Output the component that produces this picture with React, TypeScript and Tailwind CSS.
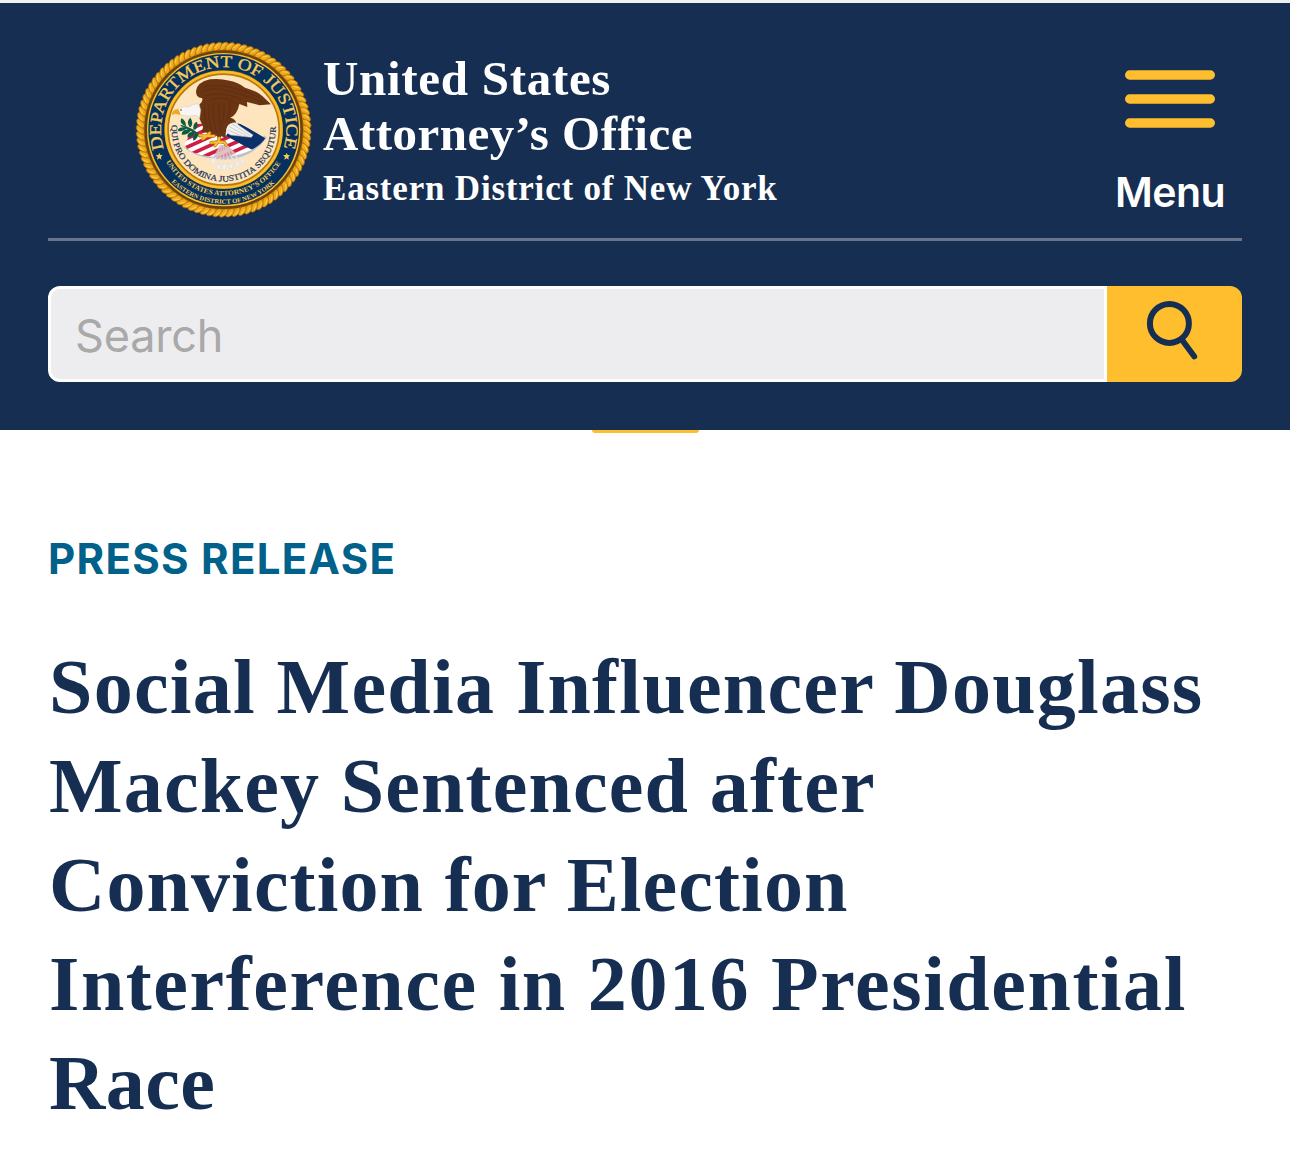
import clsx from "clsx";

const titleLines = [
  { text: "Social Media Influencer Douglass", tracking: "tracking-[1.25px]" },
  { text: "Mackey Sentenced after", tracking: "tracking-[1.15px]" },
  { text: "Conviction for Election", tracking: "tracking-[1.1px]" },
  { text: "Interference in 2016 Presidential", tracking: "tracking-[1.55px]" },
  { text: "Race", tracking: "tracking-[0.4px]" },
];

const ropeStrands = Array.from({ length: 84 }, (_, i) => (i * 360) / 84);

function Seal() {
  return (
    <svg viewBox="0 0 564 564" className="h-[188px] w-[188px] shrink-0" role="img" aria-label="Department of Justice seal">
      <defs>
        <path id="arc-top" d="M102 339 A188 188 0 1 1 460 339" />
        <path id="arc-office" d="M108 377 A198 198 0 0 0 454 377" />
        <path id="arc-district" d="M124 438 A222 222 0 0 0 438 438" />
        <path id="arc-motto" d="M125.7 266 A156 156 0 1 0 436.3 266" />
        <clipPath id="shield">
          <path d="M200 264 L163 325 Q170 347 215 358 Q290 372 350 348 Q390 332 406 307 L330 262 Z" />
        </clipPath>
      </defs>

      {/* rope border */}
      <circle cx="281" cy="281" r="259" fill="#c98611" />
      {ropeStrands.map((deg) => (
        <g key={deg} transform={`rotate(${deg} 281 281)`}>
          <ellipse cx="281" cy="31" rx="8.5" ry="16" transform="rotate(48 281 31)" fill="#f0a91b" stroke="#a36c0e" strokeWidth="2" />
          <path d="M274 33 L284 24" stroke="#ffcf4e" strokeWidth="3" strokeLinecap="round" />
        </g>
      ))}
      <circle cx="281" cy="281" r="234" fill="#f9be2b" stroke="#6e430b" strokeWidth="8" />
      <circle cx="281" cy="281" r="226" fill="#04315d" />
      <circle cx="281" cy="281" r="171" fill="#ffe5bd" stroke="#b97808" strokeWidth="14" />
      <circle cx="281" cy="281" r="173" fill="none" stroke="#f8bc2c" strokeWidth="8" />

      {/* shield */}
      <path d="M158 330 Q190 366 280 371 Q365 369 410 306 L404 298 L350 342 L200 352 Z" fill="#bcc1cb" />
      <g clipPath="url(#shield)">
        <rect x="150" y="250" width="270" height="130" fill="#fff" />
        <g stroke="#cf1d43" strokeWidth="11">
          <path d="M145 295 L235 255" />
          <path d="M145 319 L270 263" />
          <path d="M150 343 L290 280" />
          <path d="M168 361 L320 292" />
          <path d="M205 369 L340 309" />
          <path d="M250 374 L360 325" />
        </g>
        <path d="M318 258 L408 300 L410 325 L376 346 L345 331 L288 299 Z" fill="#0a316a" />
      </g>

      {/* arrows */}
      <g stroke="#e9e5e1" strokeWidth="4" fill="#f6f3ee">
        <path d="M272 328 L250 382 M275 328 L266 400 M280 328 L282 400 M284 328 L302 402 M287 328 L320 394 M290 328 L337 383" />
        <path d="M246 366 l11 4 l-9 19 l-5 -10z M261 384 l11 1 l-6 21 l-6 -10z M278 386 l11 0 l-4 22 l-8 -10z M297 386 l10 -4 l2 21 l-8 -8z M315 382 l9 -5 l5 20 l-9 -6z M330 371 l8 -5 l7 19 l-10 -6z" />
      </g>
      <path d="M270 326 L250 362 L285 370 L318 352 L292 326 Z" fill="#d8b1b8" opacity="0.75" />

      {/* olive branch */}
      <g fill="#0c5b43">
        <path d="M152 266 Q190 274 214 301 L210 305 Q184 282 152 270 Z" />
        <path d="M166 270 Q147 262 154 247 Q168 253 168 270 Z" />
        <path d="M178 272 Q168 256 181 245 Q192 260 182 274 Z" />
        <path d="M190 278 Q188 262 201 257 Q206 272 195 282 Z" />
        <path d="M168 274 Q145 271 143 284 Q158 290 171 276 Z" />
        <path d="M180 279 Q154 280 155 296 Q173 298 184 282 Z" />
        <path d="M190 286 Q169 290 173 305 Q190 304 194 290 Z" />
        <path d="M199 292 Q184 303 191 314 Q206 307 203 294 Z" />
      </g>

      {/* eagle */}
      <path d="M295 246 Q315 252 326 268 L369 297 L364 304 L302 297 Q284 289 287 276 Z" fill="#f4f1ed" stroke="#c3c2c4" strokeWidth="1.5" />
      <path d="M298 272 L350 300 M304 262 L362 300 M293 282 L335 300" stroke="#b7b9c1" strokeWidth="2" />
      <path
        d="M207 207 Q221 196 216 186 Q198 187 198 165 Q201 139 240 130 Q268 126 299 134 Q324 139 345 155 Q381 165 397 180 L423 205 L389 208 L351 198 L352 213 L328 204 Q322 236 301 245 Q317 249 318 260 Q301 258 292 271 Q285 282 288 307 L275 301 L265 311 L258 294 L238 299 L232 290 L216 288 L219 273 L207 244 Z"
        fill="#6b3513"
      />
      <g fill="none" stroke="#4f280c" strokeWidth="1.5">
        <path d="M220 154 Q254 142 301 154 Q356 167 396 189" />
        <path d="M222 164 Q264 150 312 170 Q363 184 406 201" />
        <path d="M226 180 Q274 162 335 191 M241 193 Q281 174 322 205" />
        <path d="M236 207 Q232 239 245 285 M249 204 Q247 245 259 288 M267 201 Q264 240 273 289" />
        <path d="M224 213 Q220 244 231 276 M282 201 Q284 234 276 268 M299 195 Q304 224 290 251" />
      </g>
      <path d="M143 219 Q158 210 180 212 Q187 202 207 204 L212 222 L209 246 L198 238 L176 241 L151 237 Z" fill="#f7f6f5" stroke="#c8c8cc" strokeWidth="1.5" />
      <path d="M145 219 Q124 220 126 238 L134 233 L151 237 L149 229 Z" fill="#efa91e" />
      <circle cx="153" cy="222" r="2.5" fill="#6b3513" />

      {/* talons */}
      <g fill="none" stroke="#bd7b08" strokeWidth="10" strokeLinecap="round">
        <path d="M239 291 L229 301 L209 298 M229 301 L218 309 M231 300 L252 300" />
        <path d="M268 306 L265 318 L243 320 M265 318 L255 329 M266 317 L283 319 L289 327" />
      </g>
      <g fill="none" stroke="#f7bd30" strokeWidth="6" strokeLinecap="round">
        <path d="M239 291 L229 301 L209 298 M229 301 L218 309 M231 300 L252 300" />
        <path d="M268 306 L265 318 L243 320 M265 318 L255 329 M266 317 L283 319 L289 327" />
      </g>

      {/* lettering */}
      <g className="font-['Liberation_Serif']">
        <text fontSize="50" fill="#f7ca59" stroke="#f7ca59" strokeWidth="1">
          <textPath href="#arc-top" textLength="704" lengthAdjust="spacingAndGlyphs">DEPARTMENT OF JUSTICE</textPath>
        </text>
        <text fontSize="21" fontWeight="700" fill="#f7ca59">
          <textPath href="#arc-office" textLength="416" lengthAdjust="spacingAndGlyphs">UNITED STATES ATTORNEY’S OFFICE</textPath>
        </text>
        <text fontSize="19" fontWeight="700" fill="#f7ca59">
          <textPath href="#arc-district" textLength="344" lengthAdjust="spacingAndGlyphs">EASTERN DISTRICT OF NEW YORK</textPath>
        </text>
        <text fontSize="25" fill="#173456" stroke="#173456" strokeWidth="0.6">
          <textPath href="#arc-motto" textLength="514" lengthAdjust="spacingAndGlyphs">QUI PRO DOMINA JUSTITIA SEQUITUR</textPath>
        </text>
      </g>
      <path d="M88 350 l3 7 7 1 -5 5 1 8 -6 -4 -7 4 2 -8 -6 -5 8 -1z M470 350 l3 7 7 1 -5 5 1 8 -6 -4 -7 4 2 -8 -6 -5 8 -1z" fill="#f7ca59" />
    </svg>
  );
}

function MenuButton() {
  return (
    <button className="flex w-[110px] flex-col items-center text-white">
      <svg viewBox="0 0 90 58" className="h-[58px] w-[90px]" stroke="#ffbe2e" strokeWidth="9.4" strokeLinecap="round">
        <path d="M4.7 5h80.6M4.7 29h80.6M4.7 53h80.6" />
      </svg>
      <span className="mt-[39px] font-['Inter',sans-serif] text-[41px] font-semibold leading-[50px] tracking-[-0.5px] whitespace-nowrap">Menu</span>
    </button>
  );
}

function SearchBar() {
  return (
    <form className="mt-[45px] flex h-24" onSubmit={(e) => e.preventDefault()}>
      <input
        type="text"
        placeholder="Search"
        aria-label="Search"
        className="min-w-0 flex-1 rounded-l-[12px] border-[3px] border-white bg-[#ededef] px-6 pt-[3px] font-['Inter',sans-serif] text-[45px] tracking-[-0.2px] text-black outline-none placeholder:text-[#a9a9a9]"
      />
      <button type="submit" aria-label="Submit search" className="w-[135px] rounded-r-[12px] bg-[#ffbe2e]">
        <svg viewBox="0 0 135 96" className="h-24 w-[135px]" fill="none" stroke="#162e51" strokeLinecap="round">
          <circle cx="62.4" cy="37.4" r="19.5" strokeWidth="6" />
          <path d="M75.5 54.5L87.3 70.5" strokeWidth="5.8" />
        </svg>
      </button>
    </form>
  );
}

export default function App() {
  return (
    <div className="min-h-[1173px] w-full overflow-hidden bg-white">
      <header className="h-[430px] border-t-[3px] border-[#f0f0f0] bg-[#162e51] px-12">
        <div className="flex h-[238px] items-start justify-between border-b-[3px] border-[#69738a]">
          <div className="flex pl-[82px] pt-[33px]">
            <Seal />
            <div className="ml-[5px] mt-[15px] font-['Liberation_Serif',serif] font-bold whitespace-nowrap text-white">
              <p className="text-[49px] leading-[55px] tracking-[0.7px]">United States</p>
              <p className="text-[49px] leading-[55px] tracking-[0.5px]">Attorney’s Office</p>
              <p className="text-[35px] leading-[56px] tracking-[0.8px]">Eastern District of New York</p>
            </div>
          </div>
          <div className="pr-[17px] pt-[67px]">
            <MenuButton />
          </div>
        </div>
        <SearchBar />
      </header>

      <div className="mx-auto h-[3px] w-[107px] rounded-b-[6px] bg-[#ffbe2e]" />

      <main className="px-12 pt-[101px]">
        <p className="font-['Inter',sans-serif] text-[42px] font-bold leading-[50px] tracking-[1.3px] text-[#00618a]">PRESS RELEASE</p>
        <h1 className="mt-[53px] pl-px font-['Liberation_Serif',serif] text-[78px] font-bold leading-[99px] text-[#162e51]">
          {titleLines.map((line) => (
            <span key={line.text} className={clsx("block whitespace-nowrap", line.tracking)}>
              {line.text}
            </span>
          ))}
        </h1>
      </main>
    </div>
  );
}
